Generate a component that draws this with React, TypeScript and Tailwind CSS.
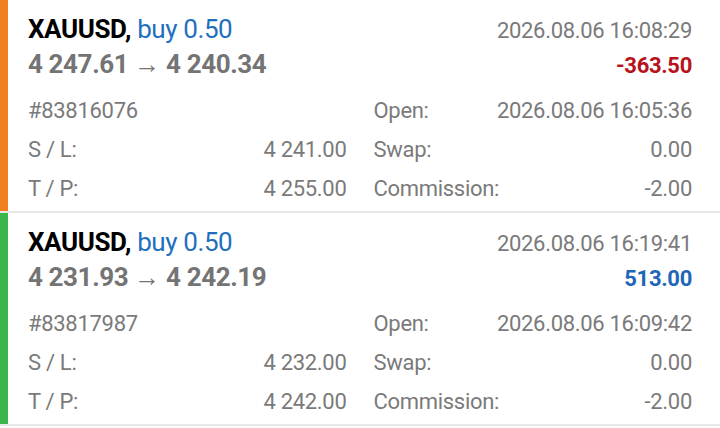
type Trade = {
  id: string;
  from: string;
  to: string;
  time: string;
  profit: string;
  negative: boolean;
  open: string;
  sl: string;
  tp: string;
  bar: string;
};

const trades: Trade[] = [
  {
    id: "#83816076",
    from: "4 247.61",
    to: "4 240.34",
    time: "2026.08.06 16:08:29",
    profit: "-363.50",
    negative: true,
    open: "2026.08.06 16:05:36",
    sl: "4 241.00",
    tp: "4 255.00",
    bar: "bg-[#f07f1f]",
  },
  {
    id: "#83817987",
    from: "4 231.93",
    to: "4 242.19",
    time: "2026.08.06 16:19:41",
    profit: "513.00",
    negative: false,
    open: "2026.08.06 16:09:42",
    sl: "4 232.00",
    tp: "4 242.00",
    bar: "bg-[#3cb54a]",
  },
];

function Row({ label, value }: { label: string; value: string }) {
  return (
    <div className="flex justify-between">
      <span>{label}</span>
      <span>{value}</span>
    </div>
  );
}

function TradeCard({ t }: { t: Trade }) {
  return (
    <div className="flex border-b-2 border-[#e8e8e8]">
      <div className={`w-[8px] shrink-0 ${t.bar}`} />
      <div className="flex-1 pl-[20px] pr-[28px] pt-[12px] pb-[3px]">
        <div className="flex items-baseline justify-between leading-[34px]">
          <span className="text-[26px] tracking-[-0.4px]">
            <span className="font-bold text-black">XAUUSD,</span>{" "}
            <span className="text-[#1f6fbf]">buy 0.50</span>
          </span>
          <span className="text-[22px] tracking-[-0.3px] text-[#7a7a7a]">
            {t.time}
          </span>
        </div>
        <div className="flex items-baseline justify-between leading-[33px]">
          <span className="text-[26px] font-bold tracking-[-0.4px] text-[#747474]">
            {t.from} → {t.to}
          </span>
          <span
            className={`text-[22px] font-bold tracking-[-0.3px] ${
              t.negative ? "text-[#b8121c]" : "text-[#1e66b8]"
            }`}
          >
            {t.profit}
          </span>
        </div>
        <div className="mt-[9px] grid grid-cols-2 gap-x-[27px] text-[22px] leading-[39px] tracking-[-0.3px] text-[#7a7a7a]">
          <div>{t.id}</div>
          <Row label="Open:" value={t.open} />
          <Row label="S / L:" value={t.sl} />
          <Row label="Swap:" value="0.00" />
          <Row label="T / P:" value={t.tp} />
          <Row label="Commission:" value="-2.00" />
        </div>
      </div>
    </div>
  );
}

export default function App() {
  return (
    <div
      className="h-[428px] w-[720px] overflow-hidden bg-white"
      style={{ fontFamily: "Roboto, 'Noto Sans', sans-serif" }}
    >
      {trades.map((t) => (
        <TradeCard key={t.id} t={t} />
      ))}
    </div>
  );
}
